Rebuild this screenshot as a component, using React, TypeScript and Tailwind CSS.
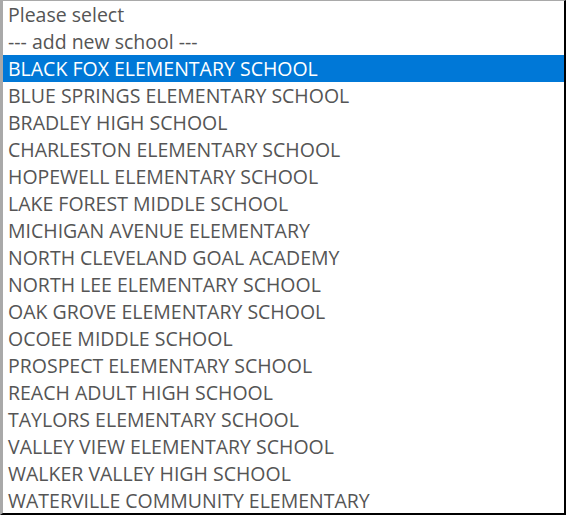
import React from "react";

const schools = [
  "Please select",
  "--- add new school ---",
  "BLACK FOX ELEMENTARY SCHOOL",
  "BLUE SPRINGS ELEMENTARY SCHOOL",
  "BRADLEY HIGH SCHOOL",
  "CHARLESTON ELEMENTARY SCHOOL",
  "HOPEWELL ELEMENTARY SCHOOL",
  "LAKE FOREST MIDDLE SCHOOL",
  "MICHIGAN AVENUE ELEMENTARY",
  "NORTH CLEVELAND GOAL ACADEMY",
  "NORTH LEE ELEMENTARY SCHOOL",
  "OAK GROVE ELEMENTARY SCHOOL",
  "OCOEE MIDDLE SCHOOL",
  "PROSPECT ELEMENTARY SCHOOL",
  "REACH ADULT HIGH SCHOOL",
  "TAYLORS ELEMENTARY SCHOOL",
  "VALLEY VIEW ELEMENTARY SCHOOL",
  "WALKER VALLEY HIGH SCHOOL",
  "WATERVILLE COMMUNITY ELEMENTARY",
];

export default function App() {
  const selected = 2;
  return (
    <div className="w-[566px] h-[515px] bg-white overflow-hidden border-t border-l-[3px] border-r-2 border-b-2 border-t-[#a9a9a9] border-l-[#a9a9a9] border-r-black border-b-black font-['Open_Sans',sans-serif]">
      <ul className="flex flex-col">
        {schools.map((s, i) => (
          <li
            key={s}
            className={
              i === selected
                ? "h-[27px] pl-[5px] leading-[27px] text-[19.5px] whitespace-nowrap bg-[#0078d7] text-white"
                : "h-[27px] pl-[5px] leading-[27px] text-[19.5px] whitespace-nowrap text-[#555555]"
            }
          >
            {s}
          </li>
        ))}
      </ul>
    </div>
  );
}
